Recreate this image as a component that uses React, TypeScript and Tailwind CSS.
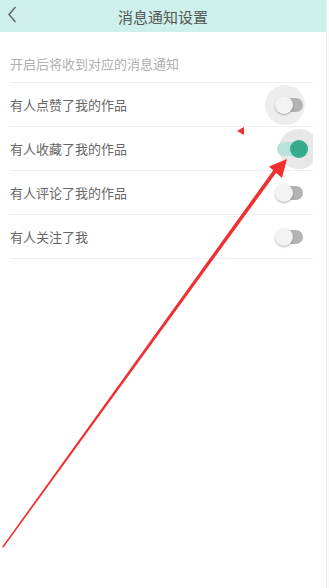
import React from "react";

const rows = [
  { label: "有人点赞了我的作品", on: false, ripple: true },
  { label: "有人收藏了我的作品", on: true, ripple: true },
  { label: "有人评论了我的作品", on: false, ripple: false },
  { label: "有人关注了我", on: false, ripple: false },
];

function Toggle({ on, ripple }: { on: boolean; ripple: boolean }) {
  return (
    <div className="relative w-[30px] h-[16px] flex items-center">
      {ripple && (
        <div
          className={`absolute w-[40px] h-[40px] rounded-full top-[-12px] ${on ? "left-[6px] bg-[#e8e8e8]" : "left-[-8px] bg-[#ededed]"}`}
        />
      )}
      <div className={`absolute left-[4px] right-0 h-[14px] rounded-full ${on ? "bg-[#b9e3d8]" : "bg-[#b3b3b3]"}`} />
      <div
        className={`absolute w-[18px] h-[18px] rounded-full top-[-1px] ${on ? "left-[17px] bg-[#35ab8c]" : "left-[2px] bg-[#f3f3f3] shadow-[0_1px_2px_rgba(0,0,0,0.3)]"}`}
      />
    </div>
  );
}

export default function App() {
  return (
    <div className="relative w-[329px] h-[588px] bg-white overflow-hidden" style={{ fontFamily: '"Noto Sans CJK SC", "Noto Sans", sans-serif' }}>
      <div className="flex h-full">
        <div className="w-[326px] flex flex-col">
          <div className="h-[32px] bg-[#cdf1ea] flex items-center relative">
            <svg className="absolute left-[6px] top-[5px]" width="12" height="20" viewBox="0 0 12 20">
              <path d="M9.5 2 L3 9.5 L9.5 17" fill="none" stroke="#666" strokeWidth="1.5" />
            </svg>
            <div className="flex-1 text-center text-[15px] text-[#555] leading-none">消息通知设置</div>
          </div>
          <div className="px-[10px] pr-[13px]">
            <div className="h-[51px] pt-[23px] text-[13px] text-[#b0b0b0] leading-[18px] border-b border-[#eeeeee]">开启后将收到对应的消息通知</div>
            {rows.map((r) => (
              <div key={r.label} className="h-[44px] flex items-center justify-between border-b border-[#eeeeee] overflow-hidden">
                <span className="text-[13px] text-[#666] leading-none">{r.label}</span>
                <div className="mr-[10px]">
                  <Toggle on={r.on} ripple={r.ripple} />
                </div>
              </div>
            ))}
          </div>
        </div>
        <div className="w-[1px] bg-[#ececec]" />
        <div className="flex-1 bg-[#fbfbfb]" />
      </div>
      <svg className="absolute left-0 top-0 pointer-events-none" width="329" height="588" viewBox="0 0 329 588">
        <polygon points="2,547 3.5,547.5 277.5,171 274.5,168.5" fill="#f03030" />
        <polygon points="287,159 269,166.5 282,178" fill="#f03030" />
        <polygon points="237,131 244,127 244,135" fill="#f03030" />
      </svg>
    </div>
  );
}
